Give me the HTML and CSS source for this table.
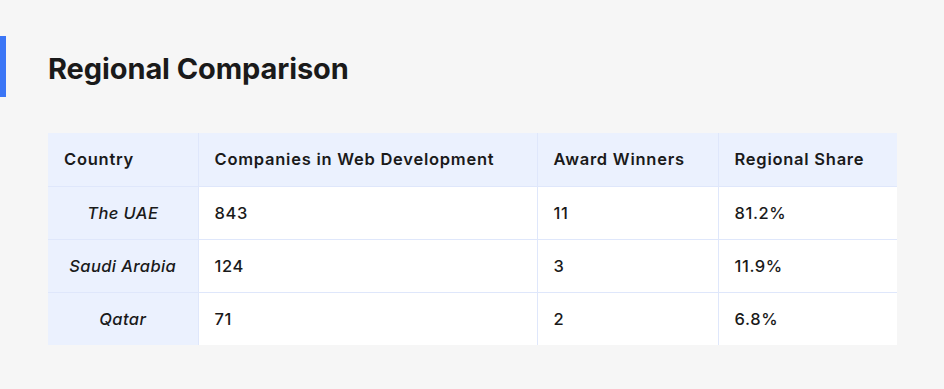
FILE: index.html
```html
<!DOCTYPE html>
<html lang="en">
<head>
<meta charset="utf-8">
<title>Regional Comparison</title>
<link rel="stylesheet" href="styles.css">
</head>
<body>
<section class="section">
  <h2 class="title">Regional Comparison</h2>
  <div class="table-wrap">
    <table class="compare">
      <colgroup>
        <col class="c1"><col class="c2"><col class="c3"><col class="c4">
      </colgroup>
      <thead>
        <tr>
          <th>Country</th>
          <th>Companies in Web Development</th>
          <th>Award Winners</th>
          <th>Regional Share</th>
        </tr>
      </thead>
      <tbody>
        <tr><td class="country">The UAE</td><td>843</td><td>11</td><td>81.2%</td></tr>
        <tr><td class="country">Saudi Arabia</td><td>124</td><td>3</td><td>11.9%</td></tr>
        <tr><td class="country">Qatar</td><td>71</td><td>2</td><td>6.8%</td></tr>
      </tbody>
    </table>
  </div>
</section>
</body>
</html>
```

FILE: styles.css
```css
html, body {
  margin: 0;
  padding: 0;
  background: #f6f6f6;
}
body {
  font-family: Inter, "Noto Sans", sans-serif;
  color: #1a1a1a;
}
.section {
  padding-top: 36px;
}
.title {
  margin: 0;
  border-left: 6px solid #3b76f6;
  padding: 3px 0 0 42px;
  box-sizing: border-box;
  height: 61px;
  display: flex;
  align-items: center;
  font-size: 29px;
  font-weight: 700;
  letter-spacing: -0.1px;
  color: #1a1a1a;
}
.table-wrap {
  padding: 36px 47px 0 48px;
}
.compare {
  width: 849px;
  table-layout: fixed;
  border-collapse: collapse;
  background: #ffffff;
}
.c1 { width: 150px; }
.c2 { width: 339px; }
.c3 { width: 181px; }
.c4 { width: 179px; }
.compare th,
.compare td {
  height: 53px;
  padding: 0 16px;
  box-sizing: border-box;
  text-align: left;
  font-size: 16.5px;
  letter-spacing: 0.6px;
  line-height: 20px;
  border: 1px solid #dfe7fb;
}
.compare tr > :first-child { border-left: none; }
.compare tr > :last-child { border-right: none; }
.compare thead th {
  border-top: none;
  background: #ebf1fe;
  font-weight: 600;
  letter-spacing: 0.75px;
}
.compare tbody tr:last-child td { border-bottom: none; }
.compare td { font-weight: 500; }
.compare td.country {
  background: #ebf1fe;
  font-style: italic;
  font-weight: 500;
  letter-spacing: 0.4px;
  text-align: center;
}
```
